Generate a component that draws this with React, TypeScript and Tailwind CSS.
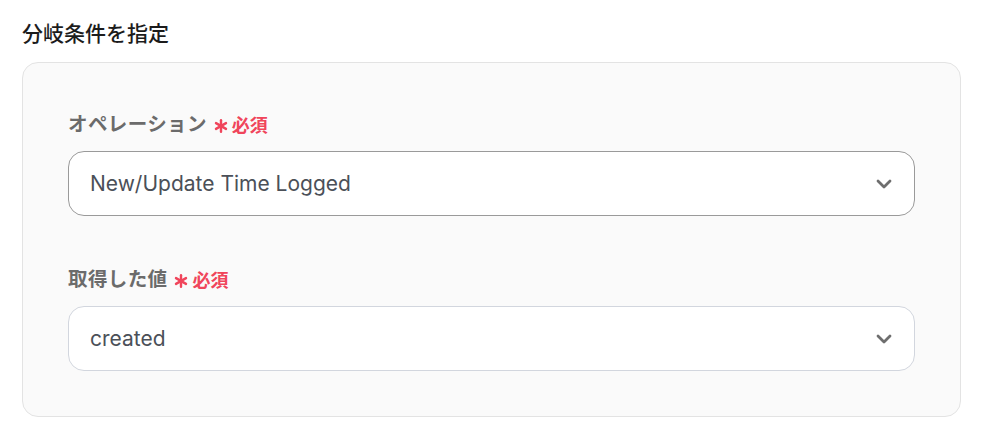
import { ChevronDown } from 'lucide-react'

const font = { fontFamily: 'Inter, "Noto Sans CJK JP", sans-serif' }

function Asterisk() {
  return (
    <svg width="14" height="14" viewBox="0 0 14 14" className="ml-[7px] mr-[4px] mt-[2px]">
      <g stroke="#f0455b" strokeWidth="2.4" strokeLinecap="round">
        <line x1="7" y1="1.2" x2="7" y2="12.8" />
        <line x1="2" y1="4.1" x2="12" y2="9.9" />
        <line x1="2" y1="9.9" x2="12" y2="4.1" />
      </g>
    </svg>
  )
}

function Field({ label, value, focused }: { label: string; value: string; focused?: boolean }) {
  return (
    <div>
      <div className="flex items-center h-[28px]">
        <span className="text-[19.5px] font-bold text-[#6b6b6b] tracking-[0.02em]">{label}</span>
        <Asterisk />
        <span className="text-[18px] font-bold text-[#f0455b]">必須</span>
      </div>
      <div
        className={`mt-[12px] h-[65px] rounded-[16px] bg-white border flex items-center justify-between pl-[21px] pr-[18px] ${
          focused ? 'border-[#9a9a9a]' : 'border-[#d2d6de]'
        }`}
      >
        <span className="text-[21px] text-[#4b5058]">{value}</span>
        <ChevronDown size={24} strokeWidth={2.8} className="text-[#6e6e6e]" />
      </div>
    </div>
  )
}

export default function App() {
  return (
    <div className="w-[994px] h-[444px] bg-white pl-[22px] pr-[33px] pt-[20px]" style={font}>
      <h1 className="text-[21px] font-medium text-[#1c1c1c] leading-[28px]">分岐条件を指定</h1>
      <div className="mt-[14px] rounded-[16px] border border-[#e3e3e3] bg-[#fafafa] px-[45px] pt-[48px] pb-[45px] flex flex-col gap-[50px]">
        <Field label="オペレーション" value="New/Update Time Logged" focused />
        <Field label="取得した値" value="created" />
      </div>
    </div>
  )
}
